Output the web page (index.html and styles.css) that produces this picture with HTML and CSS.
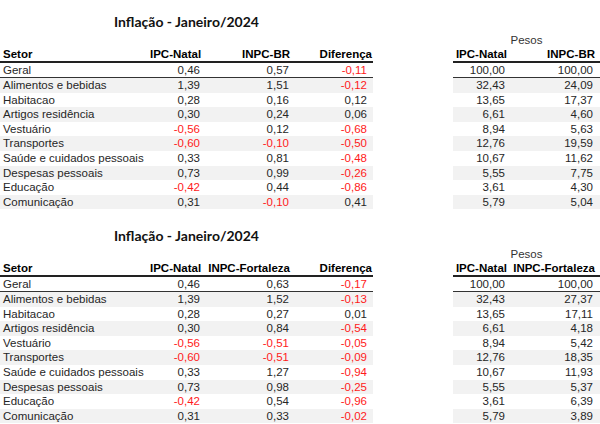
FILE: index.html
```html
<!DOCTYPE html>
<html lang="pt-BR">
<head>
<meta charset="utf-8">
<title>Inflação - Janeiro/2024</title>
<link rel="stylesheet" href="styles.css">
</head>
<body>
<section class="block">
  <div class="left">
    <h2 class="title">Inflação - Janeiro/2024</h2>
    <div class="row head l"><span class="txt">Setor</span><span>IPC-Natal</span><span>INPC-BR</span><span>Diferença</span></div>
    <div class="row first l"><span class="txt">Geral</span><span>0,46</span><span>0,57</span><span class="neg">-0,11</span></div>
    <div class="row alt l"><span class="txt">Alimentos e bebidas</span><span>1,39</span><span>1,51</span><span class="neg">-0,12</span></div>
    <div class="row l"><span class="txt">Habitacao</span><span>0,28</span><span>0,16</span><span>0,12</span></div>
    <div class="row alt l"><span class="txt">Artigos residência</span><span>0,30</span><span>0,24</span><span>0,06</span></div>
    <div class="row l"><span class="txt">Vestuário</span><span class="neg">-0,56</span><span>0,12</span><span class="neg">-0,68</span></div>
    <div class="row alt l"><span class="txt">Transportes</span><span class="neg">-0,60</span><span class="neg">-0,10</span><span class="neg">-0,50</span></div>
    <div class="row l"><span class="txt">Saúde e cuidados pessoais</span><span>0,33</span><span>0,81</span><span class="neg">-0,48</span></div>
    <div class="row alt l"><span class="txt">Despesas pessoais</span><span>0,73</span><span>0,99</span><span class="neg">-0,26</span></div>
    <div class="row l"><span class="txt">Educação</span><span class="neg">-0,42</span><span>0,44</span><span class="neg">-0,86</span></div>
    <div class="row alt l"><span class="txt">Comunicação</span><span>0,31</span><span class="neg">-0,10</span><span>0,41</span></div>
  </div>
  <div class="right">
    <div class="pesos">Pesos</div>
    <div class="row head r"><span>IPC-Natal</span><span>INPC-BR</span></div>
    <div class="row first r"><span>100,00</span><span>100,00</span></div>
    <div class="row alt r"><span>32,43</span><span>24,09</span></div>
    <div class="row r"><span>13,65</span><span>17,37</span></div>
    <div class="row alt r"><span>6,61</span><span>4,60</span></div>
    <div class="row r"><span>8,94</span><span>5,63</span></div>
    <div class="row alt r"><span>12,76</span><span>19,59</span></div>
    <div class="row r"><span>10,67</span><span>11,62</span></div>
    <div class="row alt r"><span>5,55</span><span>7,75</span></div>
    <div class="row r"><span>3,61</span><span>4,30</span></div>
    <div class="row alt r"><span>5,79</span><span>5,04</span></div>
  </div>
</section>
<section class="block">
  <div class="left">
    <h2 class="title">Inflação - Janeiro/2024</h2>
    <div class="row head l"><span class="txt">Setor</span><span>IPC-Natal</span><span>INPC-Fortaleza</span><span>Diferença</span></div>
    <div class="row first l"><span class="txt">Geral</span><span>0,46</span><span>0,63</span><span class="neg">-0,17</span></div>
    <div class="row alt l"><span class="txt">Alimentos e bebidas</span><span>1,39</span><span>1,52</span><span class="neg">-0,13</span></div>
    <div class="row l"><span class="txt">Habitacao</span><span>0,28</span><span>0,27</span><span>0,01</span></div>
    <div class="row alt l"><span class="txt">Artigos residência</span><span>0,30</span><span>0,84</span><span class="neg">-0,54</span></div>
    <div class="row l"><span class="txt">Vestuário</span><span class="neg">-0,56</span><span class="neg">-0,51</span><span class="neg">-0,05</span></div>
    <div class="row alt l"><span class="txt">Transportes</span><span class="neg">-0,60</span><span class="neg">-0,51</span><span class="neg">-0,09</span></div>
    <div class="row l"><span class="txt">Saúde e cuidados pessoais</span><span>0,33</span><span>1,27</span><span class="neg">-0,94</span></div>
    <div class="row alt l"><span class="txt">Despesas pessoais</span><span>0,73</span><span>0,98</span><span class="neg">-0,25</span></div>
    <div class="row l"><span class="txt">Educação</span><span class="neg">-0,42</span><span>0,54</span><span class="neg">-0,96</span></div>
    <div class="row alt l"><span class="txt">Comunicação</span><span>0,31</span><span>0,33</span><span class="neg">-0,02</span></div>
  </div>
  <div class="right">
    <div class="pesos">Pesos</div>
    <div class="row head r"><span>IPC-Natal</span><span>INPC-Fortaleza</span></div>
    <div class="row first r"><span>100,00</span><span>100,00</span></div>
    <div class="row alt r"><span>32,43</span><span>27,37</span></div>
    <div class="row r"><span>13,65</span><span>17,11</span></div>
    <div class="row alt r"><span>6,61</span><span>4,18</span></div>
    <div class="row r"><span>8,94</span><span>5,42</span></div>
    <div class="row alt r"><span>12,76</span><span>18,35</span></div>
    <div class="row r"><span>10,67</span><span>11,93</span></div>
    <div class="row alt r"><span>5,55</span><span>5,37</span></div>
    <div class="row r"><span>3,61</span><span>6,39</span></div>
    <div class="row alt r"><span>5,79</span><span>3,89</span></div>
  </div>
</section>
</body>
</html>
```

FILE: styles.css
```css
html, body {
  margin: 0;
  padding: 0;
  background: #ffffff;
}
body {
  width: 600px;
  height: 424px;
  overflow: hidden;
  font-family: "Liberation Sans", Arial, sans-serif;
  font-size: 11.5px;
  color: #262626;
}
.block {
  height: 214px;
  display: grid;
  grid-template-columns: 373px 80px 147px;
  grid-template-areas: "left . right";
}
.left { grid-area: left; }
.right { grid-area: right; padding-top: 34px; }
.title {
  margin: 0;
  height: 47px;
  box-sizing: border-box;
  padding-top: 13px;
  text-align: center;
  font-family: Lato, "Open Sans", sans-serif;
  font-weight: 700;
  font-size: 14px;
  line-height: 17px;
  color: #111;
}
.pesos {
  height: 13px;
  line-height: 13px;
  text-align: center;
  color: #333;
}
.row {
  display: grid;
  height: 14.6px;
  line-height: 14.6px;
  white-space: nowrap;
}
.row span { text-align: right; }
.row span.txt { text-align: left; padding-left: 3px; }
.row.l { grid-template-columns: 150px 52px 89px 82px; }
.row.r { grid-template-columns: 56px 91px; }
.row.l span:nth-child(2), .row.l span:nth-child(3) { padding-right: 2px; }
.row.l span:nth-child(4) { padding-right: 6px; }
.row.r span:nth-child(1) { padding-right: 4px; }
.row.r span:nth-child(2) { padding-right: 7px; }
.row.head {
  height: 14px;
  line-height: 14px;
  font-weight: 700;
  color: #000;
  border-bottom: 2px solid #222;
}
.row.head.l span:nth-child(2), .row.head.l span:nth-child(3) { padding-right: 1px; }
.row.head.l span:nth-child(4) { padding-right: 1px; }
.row.head.r span:nth-child(1) { padding-right: 2px; }
.row.head.r span:nth-child(2) { padding-right: 5px; }
.row.first {
  height: 14px;
  line-height: 14px;
  border-bottom: 1px solid #333;
}
.row.alt { background: #f2f2f2; }
.neg { color: #ff1a1a; }
```
